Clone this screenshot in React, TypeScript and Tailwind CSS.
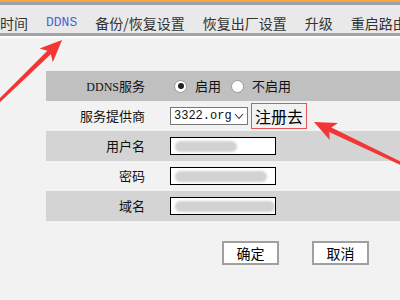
import React from 'react';

const cjk = "font-['SimSun','Noto_Sans_CJK_SC',sans-serif]";

const navItems = ['时间', 'DDNS', '备份/恢复设置', '恢复出厂设置', '升级', '重启路由器'];

// arrow polygon from tail to tip
function arrow(tx: number, ty: number, px: number, py: number, shaft = 5, headLen = 22, headW = 19) {
  const dx = px - tx;
  const dy = py - ty;
  const len = Math.hypot(dx, dy);
  const ux = dx / len;
  const uy = dy / len;
  const nx = -uy;
  const ny = ux;
  const bx = px - ux * headLen;
  const by = py - uy * headLen;
  const pts = [
    [tx + nx * 1.5, ty + ny * 1.5],
    [bx + nx * shaft / 2 + ux * 4, by + ny * shaft / 2 + uy * 4],
    [bx + nx * headW / 2, by + ny * headW / 2],
    [px, py],
    [bx - nx * headW / 2, by - ny * headW / 2],
    [bx - nx * shaft / 2 + ux * 4, by - ny * shaft / 2 + uy * 4],
    [tx - nx * 1.5, ty - ny * 1.5],
  ];
  return pts.map((p) => p.join(',')).join(' ');
}

const Smear: React.FC<{ w: number[] }> = ({ w }) => (
  <div className="flex items-center h-full pl-[4px]">
    {w.map((x, i) => (
      <div key={i} className="h-[11px] rounded-full bg-[#d2d2d2] blur-[1px]" style={{ width: x }} />
    ))}
  </div>
);

const Field: React.FC<{ w: number[] }> = ({ w }) => (
  <div className="w-[106px] h-[18px] border border-black bg-white overflow-hidden">
    <Smear w={w} />
  </div>
);

const Row: React.FC<{ label: React.ReactNode; bg: string; children?: React.ReactNode }> = ({ label, bg, children }) => (
  <div className={`flex items-center h-[30px] ${bg}`}>
    <div className="w-[99px] text-right text-[13px] text-[#111]">{label}</div>
    <div className="pl-[25px] flex items-center">{children}</div>
  </div>
);

const Radio: React.FC<{ on?: boolean }> = ({ on }) => (
  <div className="w-[13px] h-[13px] rounded-full bg-white border border-[#999] flex items-center justify-center">
    {on && <div className="w-[6px] h-[6px] rounded-full bg-[#222]" />}
  </div>
);

export default function App() {
  return (
    <div className={`relative w-[400px] h-[300px] overflow-hidden bg-[#f1f2f1] ${cjk}`}>
      {/* top nav */}
      <div className="h-[2px] bg-[#f2a93b]" />
      <div className="h-[3px] bg-[#a19fae]" />
      <div className="h-[28px] bg-[#e9e9e9] flex items-center pt-[8px] text-[14px] text-[#333] whitespace-nowrap gap-[18px]">
        {navItems.map((t) => (
          <span
            key={t}
            className={t === 'DDNS' ? "text-[#4a63d8] font-['Liberation_Mono',monospace] text-[13px]" : ''}
          >
            {t}
          </span>
        ))}
      </div>
      <div className="h-[3px] bg-[#a3a3a3]" />
      <div className="h-[2px] bg-white" />

      {/* form */}
      <div className="ml-[46px] mt-[33px]">
        <Row
          bg="bg-[#c0c0c0]"
          label={
            <>
              <span className="font-['Liberation_Serif',serif] text-[12px]">DDNS</span>服务
            </>
          }
        >
          <div className="flex items-center text-[13px] text-[#111] ml-[4px]">
            <Radio on />
            <span className="ml-[8px]">启用</span>
            <div className="ml-[10px]"><Radio /></div>
            <span className="ml-[8px]">不启用</span>
          </div>
        </Row>
        <Row bg="bg-[#f1f2f1]" label="服务提供商">
          <div className="w-[78px] h-[18px] border border-[#777] bg-white flex items-center justify-between px-[3px]">
            <span className="font-['Liberation_Mono',monospace] text-[12px] text-[#111]">3322.org</span>
            <svg width="10" height="7" viewBox="0 0 10 7">
              <path d="M1 1 L5 5.5 L9 1" fill="none" stroke="#333" strokeWidth="1.1" />
            </svg>
          </div>
          <div className="ml-[3px] w-[56px] h-[26px] border border-[#e05656] flex items-center justify-center text-[16px] text-black">
            注册去
          </div>
        </Row>
        <Row bg="bg-[#d4d4d4]" label="用户名">
          <Field w={[62]} />
        </Row>
        <Row bg="bg-[#f1f2f1]" label="密码">
          <Field w={[92]} />
        </Row>
        <Row bg="bg-[#d4d4d4]" label="域名">
          <Field w={[100]} />
        </Row>
      </div>

      <div className="flex mt-[20px] ml-[222px] gap-[33px]">
        <button className="w-[57px] h-[24px] bg-white border-2 border-[#a0a0a0] text-[14px] text-black">确定</button>
        <button className="w-[57px] h-[24px] bg-white border-2 border-[#a0a0a0] text-[14px] text-black">取消</button>
      </div>

      {/* red arrows */}
      <svg className="absolute inset-0 pointer-events-none" width="400" height="300" viewBox="0 0 400 300">
        <g fill="#f23535">
          <polygon points={arrow(-4, 104, 62, 40)} />
          <polygon points={arrow(404, 165, 314, 122)} />
        </g>
      </svg>
    </div>
  );
}
